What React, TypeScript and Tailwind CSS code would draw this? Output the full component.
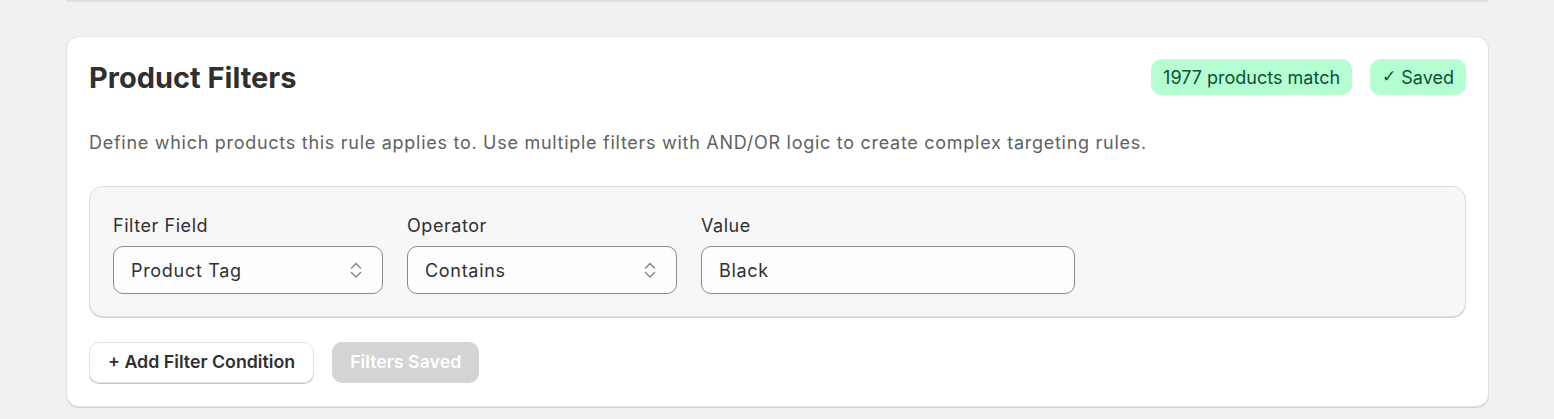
import { useState } from "react";

function SelectArrows() {
  return (
    <svg width="16" height="20" viewBox="0 0 16 20" fill="none" className="text-[#8a8a8a]">
      <path d="M3.5 8 L8 3.5 L12.5 8" stroke="currentColor" strokeWidth="1.5" strokeLinecap="round" strokeLinejoin="round" />
      <path d="M3.5 12.5 L8 17 L12.5 12.5" stroke="currentColor" strokeWidth="1.5" strokeLinecap="round" strokeLinejoin="round" />
    </svg>
  );
}

function SelectBox({ label, value }: { label: string; value: string }) {
  return (
    <div className="flex flex-col gap-[8px] w-[270px]">
      <span className="text-[18px] leading-[24px] tracking-[0.55px] text-[#303030]">{label}</span>
      <div className="h-[48px] rounded-[10px] border border-[#8a8a8a] bg-[#fdfdfd] pl-[17px] pr-[18px] flex items-center justify-between">
        <span className="text-[18px] tracking-[0.7px] text-[#303030]">{value}</span>
        <SelectArrows />
      </div>
    </div>
  );
}

export default function App() {
  const [value, setValue] = useState("Black");

  return (
    <div className="min-h-[419px] bg-[#f1f1f1] pl-[66px] pr-[65px] font-['Inter',sans-serif] overflow-hidden">
      {/* previous card, only its bottom edge shows */}
      <div className="h-[2px] -mt-px rounded-b-[12px] bg-white border-b border-[#dcdcdc] shadow-[0_1px_0_rgba(0,0,0,0.05)]" />

      <div className="mt-[35px] bg-white rounded-[13px] border border-[#e3e3e3] shadow-[0_1px_0_#d4d4d4] px-[22px] pt-[22px] pb-[23px]">
        <div className="flex items-center justify-between h-[36px]">
          <h2 className="text-[29px] leading-[36px] font-bold text-[#303030] pt-[1px]">Product Filters</h2>
          <div className="flex items-center gap-[18px]">
            <span className="h-[36px] px-[12px] rounded-[10px] bg-[#b4fed2] text-[#0c5132] text-[18px] flex items-center">
              1977 products match
            </span>
            <span className="h-[36px] px-[12px] rounded-[10px] bg-[#b4fed2] text-[#0c5132] text-[18px] flex items-center">
              <span className="font-['DejaVu_Sans',sans-serif] text-[17px] mr-[5px]">✓</span>Saved
            </span>
          </div>
        </div>

        <p className="mt-[35px] text-[18px] leading-[26px] tracking-[0.72px] text-[#616161]">
          Define which products this rule applies to. Use multiple filters with AND/OR logic to create complex targeting rules.
        </p>

        <div className="mt-[30px] rounded-[14px] border border-[#dedede] bg-[#f7f7f7] shadow-[0_1px_0_#d4d4d4] px-[23px] pt-[27px] pb-[22px] flex gap-[24px]">
          <SelectBox label="Filter Field" value="Product Tag" />
          <SelectBox label="Operator" value="Contains" />
          <div className="flex flex-col gap-[8px] w-[374px]">
            <span className="text-[18px] leading-[24px] tracking-[0.55px] text-[#303030]">Value</span>
            <input
              value={value}
              onChange={(e) => setValue(e.target.value)}
              className="h-[48px] rounded-[10px] border border-[#8a8a8a] bg-[#fdfdfd] px-[17px] text-[18px] tracking-[0.7px] text-[#303030] outline-none"
            />
          </div>
        </div>

        <div className="mt-[25px] flex gap-[18px]">
          <button className="h-[41px] px-[18px] rounded-[10px] bg-white border border-[#e3e3e3] shadow-[0_1px_0_#c4c4c4] text-[17.8px] font-semibold text-[#303030]">
            + Add Filter Condition
          </button>
          <button className="h-[41px] px-[18px] rounded-[10px] bg-[#d4d4d4] text-[17.8px] font-semibold text-white">
            Filters Saved
          </button>
        </div>
      </div>
    </div>
  );
}
